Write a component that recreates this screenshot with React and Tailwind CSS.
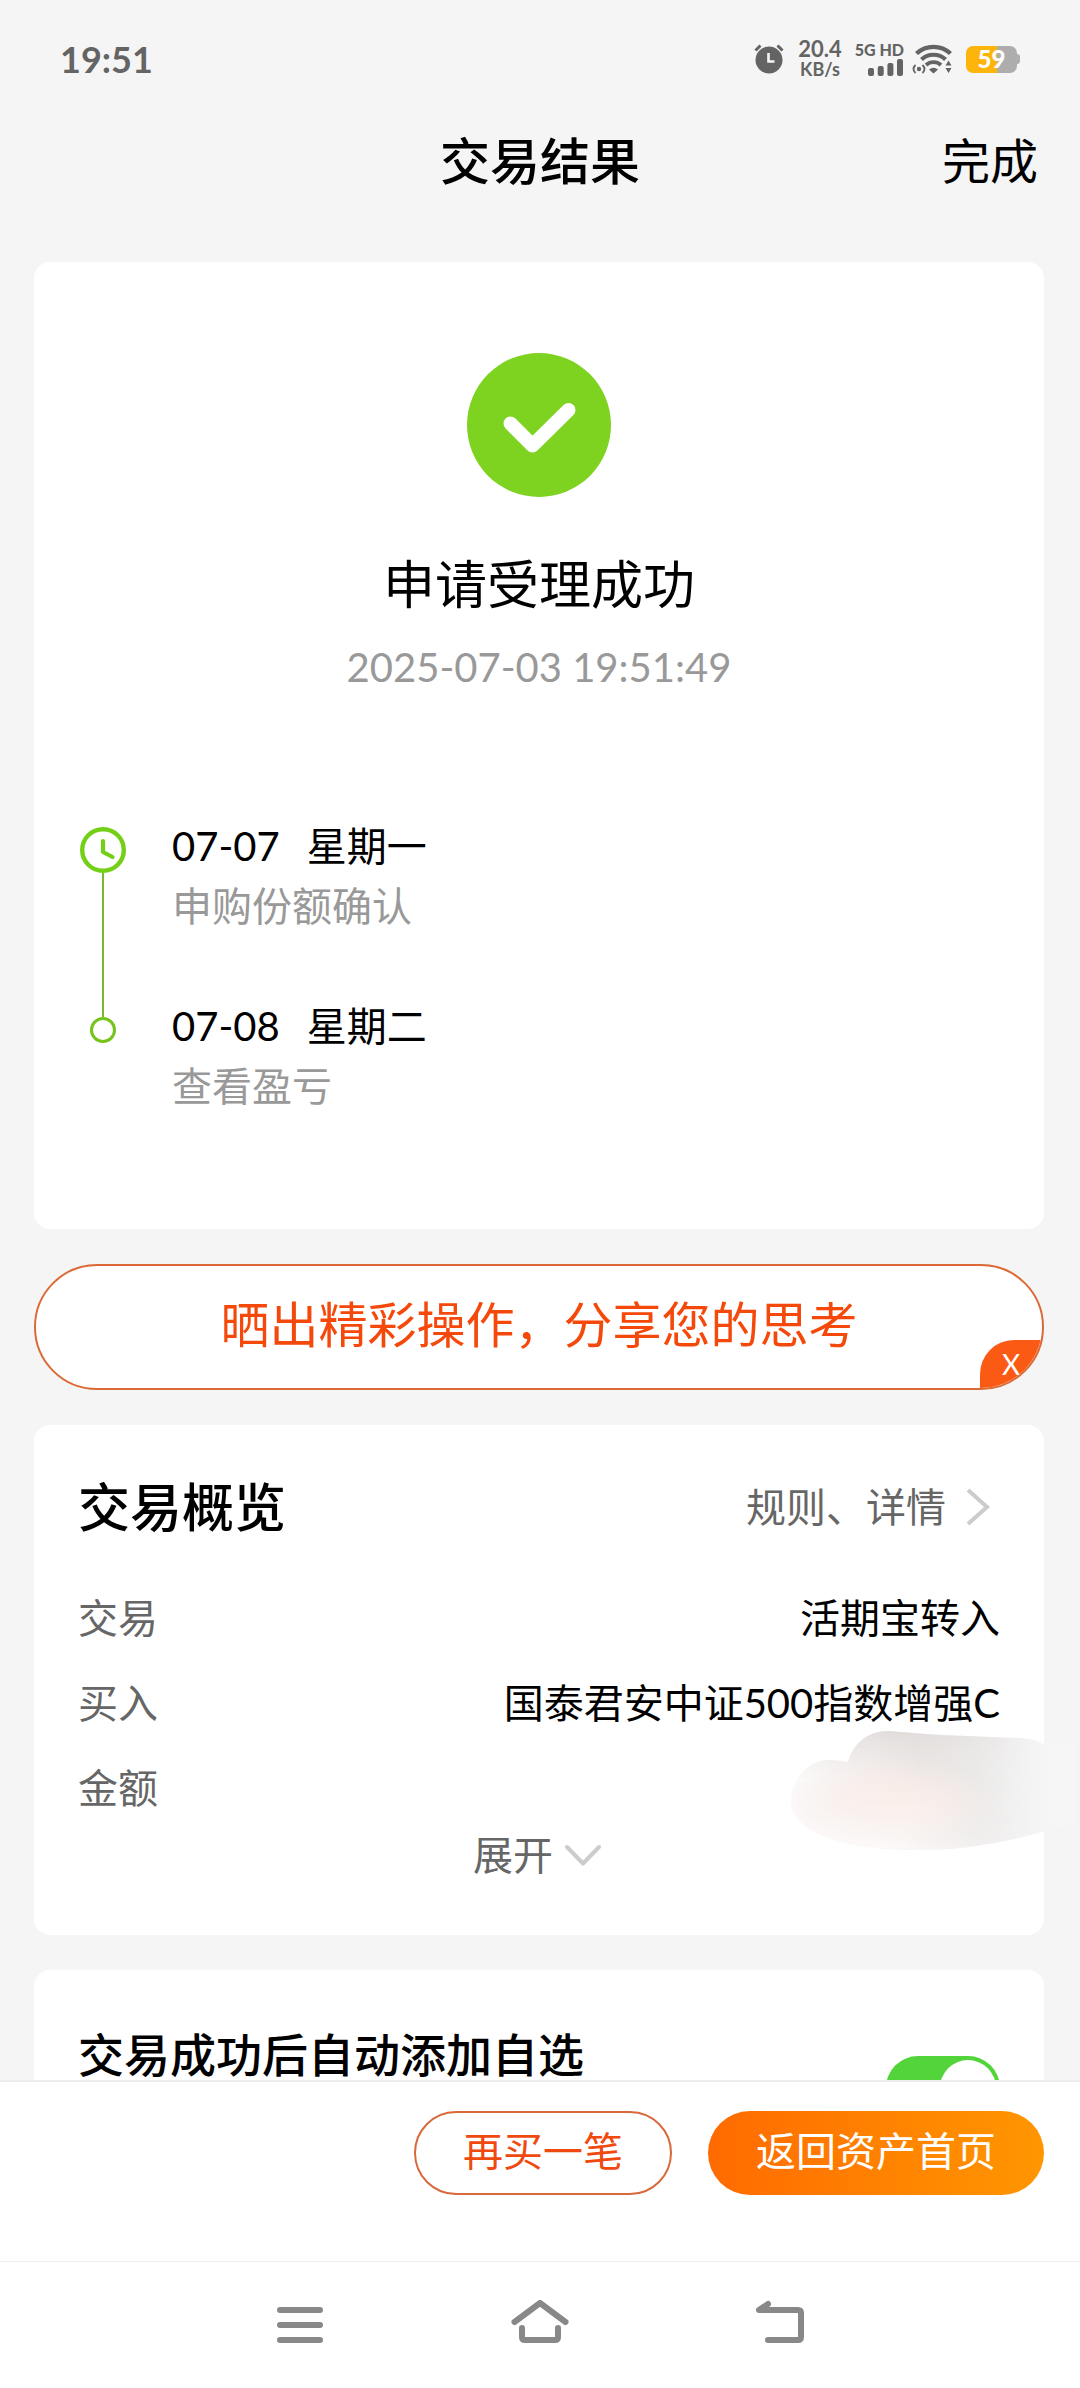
import { useState } from "react";

const steps = [
  { date: "07-07", day: "星期一", note: "申购份额确认" },
  { date: "07-08", day: "星期二", note: "查看盈亏" },
];

const rows = [
  { label: "交易", value: "活期宝转入" },
  { label: "买入", value: "国泰君安中证500指数增强C" },
  { label: "金额", value: "", hidden: true },
];

const StatusBar = () => (
  <div className="flex h-[118px] shrink-0 items-center justify-between px-[60px] text-[#646464]">
    <span className="text-[36px] leading-[40px] font-bold">19:51</span>
    <div className="flex items-center">
      <svg width="30" height="30" viewBox="0 0 30 30">
        <circle cx="15" cy="16" r="13.5" fill="currentColor" />
        <path
          d="M1.5 6.5l5-5M28.5 6.5l-5-5"
          stroke="currentColor"
          strokeWidth="3"
        />
        <path
          d="M14.5 9v8.5h6"
          fill="none"
          stroke="#f5f5f5"
          strokeWidth="2.6"
        />
      </svg>
      <div className="ml-3 flex w-12 flex-col items-center font-bold">
        <span className="text-[22px] leading-[20px]">20.4</span>
        <span className="text-[18px] leading-[20px]">KB/s</span>
      </div>
      <div className="ml-3 flex w-12 flex-col items-end gap-0.5">
        <span className="text-[16px] leading-[15px] font-black whitespace-nowrap">
          5G HD
        </span>
        <svg width="36" height="17" viewBox="0 0 36 17" fill="currentColor">
          <rect x="0" y="9" width="6" height="8" rx="2" />
          <rect x="9.7" y="7" width="6" height="10" rx="2" />
          <rect x="19.4" y="4" width="6" height="13" rx="2" />
          <rect x="29" y="0" width="6" height="17" rx="2" />
        </svg>
      </div>
      <svg
        className="ml-2"
        width="42"
        height="30"
        viewBox="0 0 42 30"
        fill="none"
        stroke="currentColor"
      >
        <path d="M4.5 9.5a25 25 0 0 1 34 0" strokeWidth="4.4" />
        <path d="M9.5 15.5a17.5 17.5 0 0 1 24 0" strokeWidth="4.2" />
        <path d="M14 21a11 11 0 0 1 15 0" strokeWidth="3.8" />
        <path
          d="M17 25.5q4.5-3.5 9 0l-4.5 4z"
          fill="currentColor"
          stroke="none"
        />
        <circle cx="7" cy="25" r="2.2" fill="currentColor" stroke="none" />
        <path d="M3.5 21q-4 4 0 8M10.5 21q4 4 0 8" strokeWidth="1.8" />
        <path
          d="M33.5 21.5l3-5 3 5zM33.5 24l3 5 3-5z"
          fill="currentColor"
          stroke="none"
        />
      </svg>
      <div className="ml-3 flex items-center">
        <div className="flex h-[27px] w-[51px] items-center justify-center rounded-[7px] bg-linear-to-r from-[#fdb50b] from-60% to-[#adadad] to-60% text-[24px] leading-[24px] font-black text-white">
          59
        </div>
        <div className="h-2.5 w-[3px] rounded-r-sm bg-[#adadad]" />
      </div>
    </div>
  </div>
);

const Header = () => (
  <header className="grid h-[86px] shrink-0 grid-cols-3 items-center px-[42px] text-black">
    <h1 className="col-start-2 text-center text-[50px] leading-[78px] font-medium">
      交易结果
    </h1>
    <button className="justify-self-end text-[48px] leading-[80px]">
      完成
    </button>
  </header>
);

const Timeline = () => (
  <div className="mt-[124px] flex gap-[46px] px-[46px]">
    <div className="flex w-[46px] flex-col items-center pt-[11px] pb-[73px]">
      <svg
        width="46"
        height="46"
        viewBox="0 0 46 46"
        fill="none"
        stroke="#74d016"
        strokeLinecap="round"
        strokeLinejoin="round"
      >
        <circle cx="23" cy="23" r="20.8" strokeWidth="4.4" />
        <path d="M23 14v11l9.5 5" strokeWidth="4.2" />
      </svg>
      <div className="w-0.5 flex-1 bg-[#78b833]" />
      <div className="size-[26px] rounded-full border-3 border-[#74c41c]" />
    </div>
    <ol className="flex flex-col gap-[60px] text-[40px]">
      {steps.map((step) => (
        <li key={step.date} className="leading-[60px]">
          <div className="flex gap-[27px] text-black">
            <span>{step.date}</span>
            <span>{step.day}</span>
          </div>
          <p className="text-[#999999]">{step.note}</p>
        </li>
      ))}
    </ol>
  </div>
);

const Result = () => (
  <section className="flex shrink-0 flex-col rounded-[16px] bg-white pt-[91px] pb-[113px]">
    <svg className="self-center" width="144" height="144" viewBox="0 0 144 144">
      <circle cx="72" cy="72" r="72" fill="#7ed321" />
      <path
        d="M43.5 70.5l22 22 36-35.5"
        fill="none"
        stroke="#fff"
        strokeWidth="14"
        strokeLinecap="round"
        strokeLinejoin="round"
      />
    </svg>
    <h2 className="mt-[57px] text-center text-[52px] leading-[60px] text-black">
      申请受理成功
    </h2>
    <p className="mt-7 text-center text-[40px] leading-[50px] text-[#999999]">
      2025-07-03 19:51:49
    </p>
    <Timeline />
  </section>
);

const ShareBanner = ({ onClose }) => (
  <div className="relative flex h-[126px] shrink-0 overflow-hidden rounded-full border-2 border-[#dc6a38] bg-white">
    <button className="flex-1 pb-1 text-center text-[49px] text-[#f5490c]">
      晒出精彩操作，分享您的思考
    </button>
    <button
      onClick={onClose}
      className="absolute right-0 bottom-0 h-12 w-[62px] rounded-tl-[34px] bg-[#fb5a14] text-center text-[28px] leading-[48px] text-white"
    >
      X
    </button>
  </div>
);

// smear that covers the amount
const AmountMask = () => (
  <svg
    className="absolute -top-4 -right-[75px]"
    width="284"
    height="122"
    viewBox="0 0 284 122"
  >
    <defs>
      <linearGradient id="maskBase" x1="0" y1="0" x2="1" y2="0">
        <stop offset="0" stopColor="#fdfcfc" />
        <stop offset="0.25" stopColor="#f3eeed" />
        <stop offset="0.45" stopColor="#e9e4e2" />
        <stop offset="0.65" stopColor="#ebe9e8" />
        <stop offset="0.8" stopColor="#f2f2f2" />
        <stop offset="0.92" stopColor="#f6f6f6" />
        <stop offset="1" stopColor="#f6f6f6" />
      </linearGradient>
      <radialGradient id="maskWarm" cx="0.36" cy="0.6" r="0.36">
        <stop offset="0" stopColor="#fdede6" />
        <stop offset="0.4" stopColor="#fcede8" stopOpacity="0.8" />
        <stop offset="1" stopColor="#fdf0ec" stopOpacity="0" />
      </radialGradient>
      <linearGradient id="maskFade" x1="0" y1="0" x2="0" y2="1">
        <stop offset="0" stopColor="#dbd7d6" stopOpacity="0.7" />
        <stop offset="0.4" stopColor="#f4efed" stopOpacity="0.1" />
        <stop offset="1" stopColor="#fffcfb" stopOpacity="0.9" />
      </linearGradient>
      <linearGradient id="maskSide" x1="0" y1="0" x2="1" y2="0">
        <stop offset="0.4" stopColor="#fff" />
        <stop offset="0.85" stopColor="#000" />
      </linearGradient>
      <mask id="maskLeft">
        <rect width="284" height="122" fill="url(#maskSide)" />
      </mask>
      <clipPath id="maskShape">
        <path d="M0 70C2 45 20 30 38 30Q48 30 57 32C62 14 76 1 98 1Q120 3 150 5L230 8Q245 9 254 15L284 11V94L254 101Q190 120 130 120C60 120 0 106 0 70z" />
      </clipPath>
    </defs>
    <g clipPath="url(#maskShape)">
      <rect width="284" height="122" fill="url(#maskBase)" />
      <rect width="284" height="122" fill="url(#maskWarm)" />
      <rect
        width="284"
        height="122"
        fill="url(#maskFade)"
        mask="url(#maskLeft)"
      />
    </g>
  </svg>
);

const Overview = () => (
  <section className="shrink-0 rounded-[16px] bg-white px-11 pt-[42px] pb-14">
    <div className="flex h-20 items-center justify-between">
      <h2 className="text-[52px] leading-[80px] font-medium text-black">
        交易概览
      </h2>
      <a
        href="#detail"
        className="flex items-center gap-5 pr-[10px] text-[40px] leading-[80px] text-[#666666]"
      >
        规则、详情
        <svg
          width="24"
          height="38"
          viewBox="0 0 24 38"
          fill="none"
          stroke="#cccccc"
          strokeWidth="4"
        >
          <path d="M2 2l19 17L2 36" />
        </svg>
      </a>
    </div>
    <dl className="mt-[29px] text-[40px] leading-[85px]">
      {rows.map((row) => (
        <div
          key={row.label}
          className="relative flex min-h-[85px] justify-between"
        >
          <dt className="text-[#666666]">{row.label}</dt>
          <dd className="text-black">{row.value}</dd>
          {row.hidden && <AmountMask />}
        </div>
      ))}
    </dl>
    <button className="mx-auto flex h-12 items-center gap-3 pr-1 text-[40px] leading-[48px] text-[#666666]">
      展开
      <svg
        width="36"
        height="22"
        viewBox="0 0 36 22"
        fill="none"
        stroke="#cccccc"
        strokeWidth="4"
        strokeLinecap="round"
        strokeLinejoin="round"
      >
        <path d="M2 3l16 16.5L34 3" />
      </svg>
    </button>
  </section>
);

const AutoFavorite = () => {
  const [checked, setChecked] = useState(true);

  return (
    <label className="flex shrink-0 items-start justify-between rounded-[16px] bg-white px-11 pt-[60px] pb-20">
      <span className="text-[46px] leading-[50px] font-medium text-black">
        交易成功后自动添加自选
      </span>
      <input
        type="checkbox"
        checked={checked}
        onChange={(e) => setChecked(e.target.checked)}
        className="mt-[26px] flex h-16 w-[114px] appearance-none rounded-full bg-[#cccccc] p-1 before:size-14 before:rounded-full before:bg-white checked:justify-end checked:bg-[#53d43a]"
      />
    </label>
  );
};

const ActionBar = () => (
  <footer className="flex h-[181px] shrink-0 items-start justify-end gap-9 border-t-2 border-[#ececec] bg-white px-9 pt-[29px] text-[40px]">
    <button className="h-[84px] w-[258px] rounded-full border-2 border-[#d9683a] pb-1 leading-[76px] text-[#f0490f]">
      再买一笔
    </button>
    <button className="h-[84px] w-[336px] rounded-full bg-linear-to-r from-[#ff6a00] to-[#ff9600] pb-1 leading-[80px] text-white">
      返回资产首页
    </button>
  </footer>
);

const NavBar = () => (
  <nav className="flex h-[127px] shrink-0 items-center justify-center border-t border-[#efefef] bg-white pb-1 text-[#888888]">
    <button aria-label="最近任务" className="flex w-60 justify-center">
      <svg
        width="60"
        height="46"
        viewBox="0 0 60 46"
        stroke="currentColor"
        strokeWidth="6"
        strokeLinecap="round"
      >
        <path d="M10 10h40M10 25h40M10 40h40" />
      </svg>
    </button>
    <button aria-label="主屏幕" className="flex w-60 justify-center">
      <svg
        width="60"
        height="46"
        viewBox="0 0 60 46"
        fill="none"
        stroke="currentColor"
        strokeWidth="6"
        strokeLinecap="round"
        strokeLinejoin="round"
      >
        <path d="M4.5 22L30 3l25.5 19" />
        <path d="M12 28v9q0 3 3 3h30q3 0 3-3v-9" />
      </svg>
    </button>
    <button aria-label="返回" className="flex w-60 justify-center">
      <svg
        width="60"
        height="46"
        viewBox="0 0 60 46"
        fill="none"
        stroke="currentColor"
        strokeWidth="6"
        strokeLinecap="round"
        strokeLinejoin="round"
      >
        <path d="M18 4L9 10h39q3 0 3 3v24q0 3-3 3H18" />
      </svg>
    </button>
  </nav>
);

const App = () => {
  const [showShare, setShowShare] = useState(true);

  return (
    <div className="flex h-screen flex-col bg-[#f5f5f5] font-['Lato','Noto_Sans_CJK_SC',sans-serif]">
      <StatusBar />
      <Header />
      <main className="flex min-h-0 flex-1 flex-col gap-[35px] overflow-hidden pt-[58px] pr-9 pl-[34px]">
        <Result />
        {showShare && <ShareBanner onClose={() => setShowShare(false)} />}
        <Overview />
        <AutoFavorite />
      </main>
      <ActionBar />
      <NavBar />
    </div>
  );
};

export default App;
